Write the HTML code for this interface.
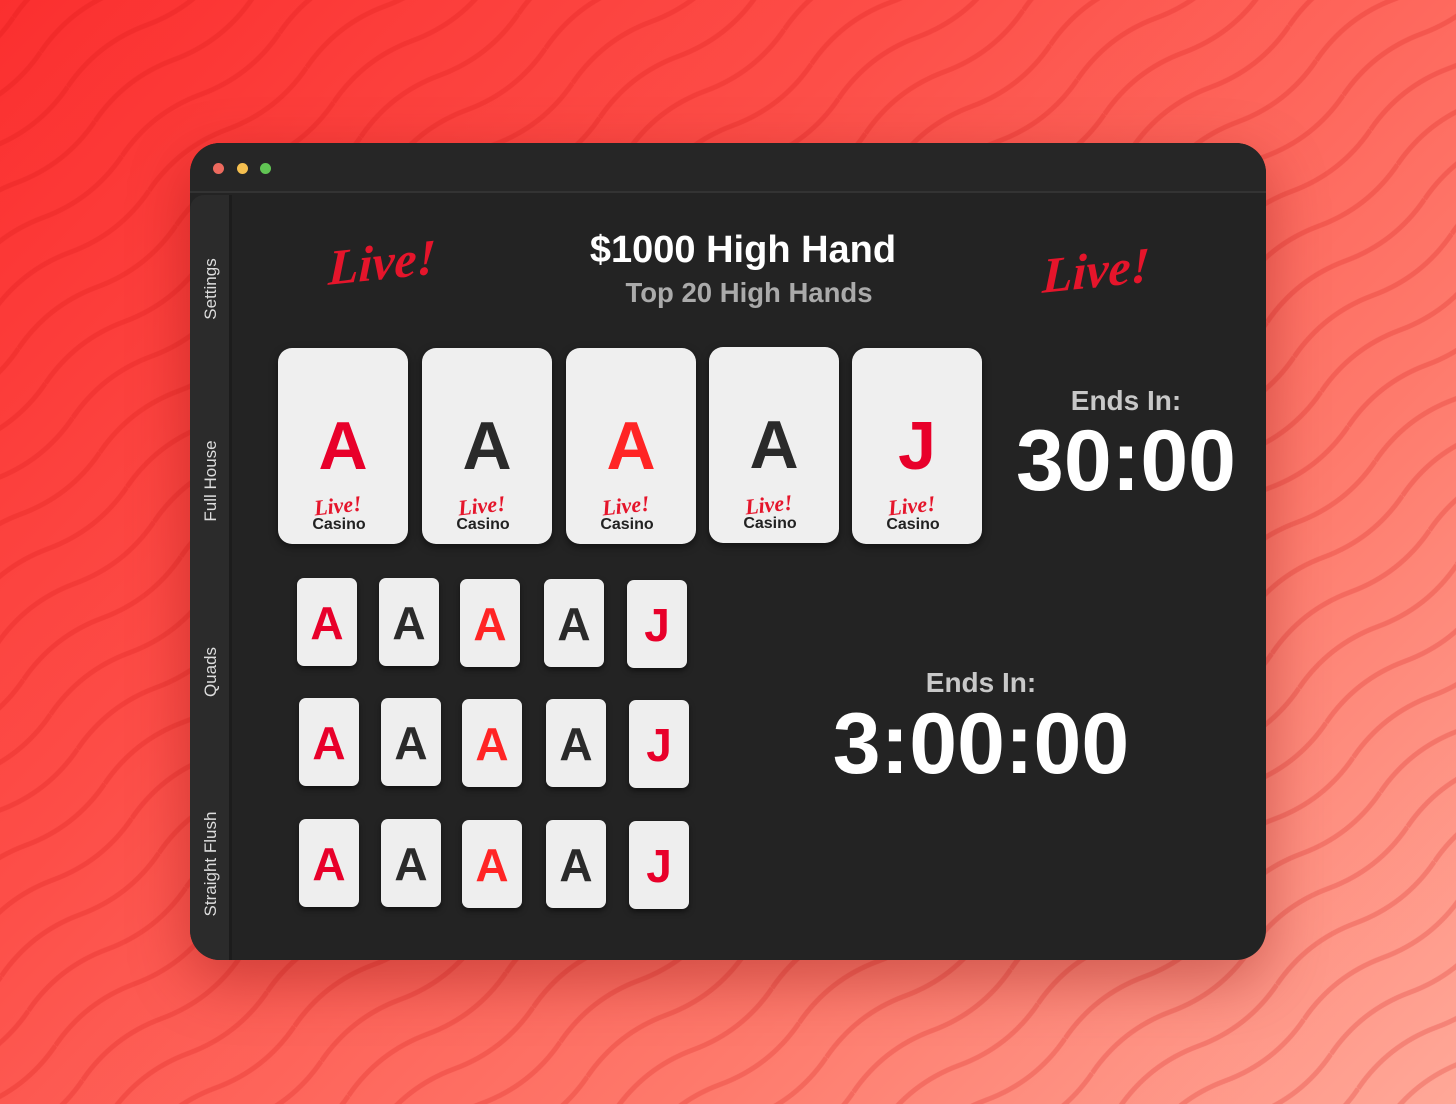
<!DOCTYPE html>
<html><head><meta charset="utf-8"><style>
*{margin:0;padding:0;box-sizing:border-box}
body{width:1456px;height:1104px;overflow:hidden;position:relative;font-family:"Liberation Sans",sans-serif;background:linear-gradient(135deg,#fb2f2f 0%,#fd4e48 35%,#fe7a6c 70%,#ffa898 100%)}
.bgs{position:absolute;left:0;top:0}
.win{position:absolute;left:190px;top:143px;width:1076px;height:817px;border-radius:30px;background:#232323;overflow:hidden;box-shadow:0 20px 60px rgba(120,0,0,.35)}
.tb{position:absolute;left:0;top:0;width:100%;height:50px;background:#262626;border-bottom:2px solid #333}
.dot{position:absolute;top:20px;width:11px;height:11px;border-radius:50%}
.side{position:absolute;left:0;top:52px;width:42px;bottom:0;background:#2b2b2b;border-right:3px solid #1c1c1c;border-top-left-radius:14px}
.lab{position:absolute;left:21px;color:#ddd;font-size:17px;white-space:nowrap;transform:translate(-50%,-50%) rotate(-90deg)}
.abs{position:absolute}
.live{position:absolute;color:#e5152b;font-family:"Liberation Serif",serif;font-style:italic;font-weight:bold;transform:rotate(-6deg) skewX(-8deg);white-space:nowrap}
.card{position:absolute;background:#efefef;border-radius:14px;box-shadow:0 3px 8px rgba(0,0,0,.5);width:130px;height:196px;text-align:center}
.card .l{position:absolute;left:0;right:0;top:64px;font-size:68px;font-weight:bold;line-height:1}
.card .cs{position:absolute;left:0;right:8px;top:169px;font-size:16px;font-weight:bold;color:#222;line-height:1}
.card .lv{position:absolute;left:36px;top:145px;font-size:22px;color:#e5152b;font-family:"Liberation Serif",serif;font-style:italic;font-weight:bold;transform:rotate(-6deg)}
.sc{position:absolute;width:60px;height:88px;background:#eee;border-radius:7px;box-shadow:0 3px 6px rgba(0,0,0,.5);text-align:center;font-size:46px;font-weight:bold;line-height:1;padding-top:22px}
.r{color:#e8002a}.o{color:#ff2424}.k{color:#2a2a2a}
.ends{position:absolute;color:#c8c8c8;font-weight:bold;font-size:28px;transform:translateX(-50%);white-space:nowrap}
.tm{position:absolute;color:#fff;font-weight:bold;transform:translateX(-50%);white-space:nowrap;line-height:1}
</style></head><body>
<svg class="bgs" width="1456" height="1104"><defs><pattern id="w" width="200" height="44" patternUnits="userSpaceOnUse" patternTransform="rotate(-38)"><path d="M0 22 Q50 6 100 22 T200 22" fill="none" stroke="#d01010" stroke-opacity=".22" stroke-width="5"/></pattern></defs><rect width="1456" height="1104" fill="url(#w)"/></svg>
<div class="win">
<div class="tb"><div class="dot" style="left:23px;background:#ed6a5e"></div><div class="dot" style="left:47px;background:#f5bf4f"></div><div class="dot" style="left:70px;background:#61c554"></div></div>
<div class="side">
<div class="lab" style="top:94px">Settings</div>
<div class="lab" style="top:286px">Full House</div>
<div class="lab" style="top:477px">Quads</div>
<div class="lab" style="top:669px">Straight Flush</div>
</div>
<div class="live" style="left:138px;top:90px;font-size:50px">Live!</div>
<div class="live" style="left:852px;top:98px;font-size:50px">Live!</div>
<div class="abs" style="left:0;width:1106px;text-align:center;top:86px;color:#fff;font-weight:bold;font-size:38px">$1000 High Hand</div>
<div class="abs" style="left:0;width:1118px;text-align:center;top:134px;color:#aaa;font-weight:bold;font-size:27.5px">Top 20 High Hands</div>

<div class="card" style="left:88px;top:205px"><div class="l r">A</div><div class="lv">Live!</div><div class="cs">Casino</div></div>
<div class="card" style="left:232px;top:205px"><div class="l k">A</div><div class="lv">Live!</div><div class="cs">Casino</div></div>
<div class="card" style="left:376px;top:205px"><div class="l o">A</div><div class="lv">Live!</div><div class="cs">Casino</div></div>
<div class="card" style="left:519px;top:204px"><div class="l k">A</div><div class="lv">Live!</div><div class="cs">Casino</div></div>
<div class="card" style="left:662px;top:205px"><div class="l r">J</div><div class="lv">Live!</div><div class="cs">Casino</div></div>

<div class="ends" style="left:936px;top:242px">Ends In:</div>
<div class="tm" style="left:936px;top:275px;font-size:86px">30:00</div>

<div class="sc r" style="left:107px;top:435px">A</div>
<div class="sc k" style="left:189px;top:435px">A</div>
<div class="sc o" style="left:270px;top:436px">A</div>
<div class="sc k" style="left:354px;top:436px">A</div>
<div class="sc r" style="left:437px;top:437px">J</div>

<div class="sc r" style="left:109px;top:555px">A</div>
<div class="sc k" style="left:191px;top:555px">A</div>
<div class="sc o" style="left:272px;top:556px">A</div>
<div class="sc k" style="left:356px;top:556px">A</div>
<div class="sc r" style="left:439px;top:557px">J</div>

<div class="sc r" style="left:109px;top:676px">A</div>
<div class="sc k" style="left:191px;top:676px">A</div>
<div class="sc o" style="left:272px;top:677px">A</div>
<div class="sc k" style="left:356px;top:677px">A</div>
<div class="sc r" style="left:439px;top:678px">J</div>

<div class="ends" style="left:791px;top:524px">Ends In:</div>
<div class="tm" style="left:791px;top:558px;font-size:86px">3:00:00</div>
</div>
</body></html>
